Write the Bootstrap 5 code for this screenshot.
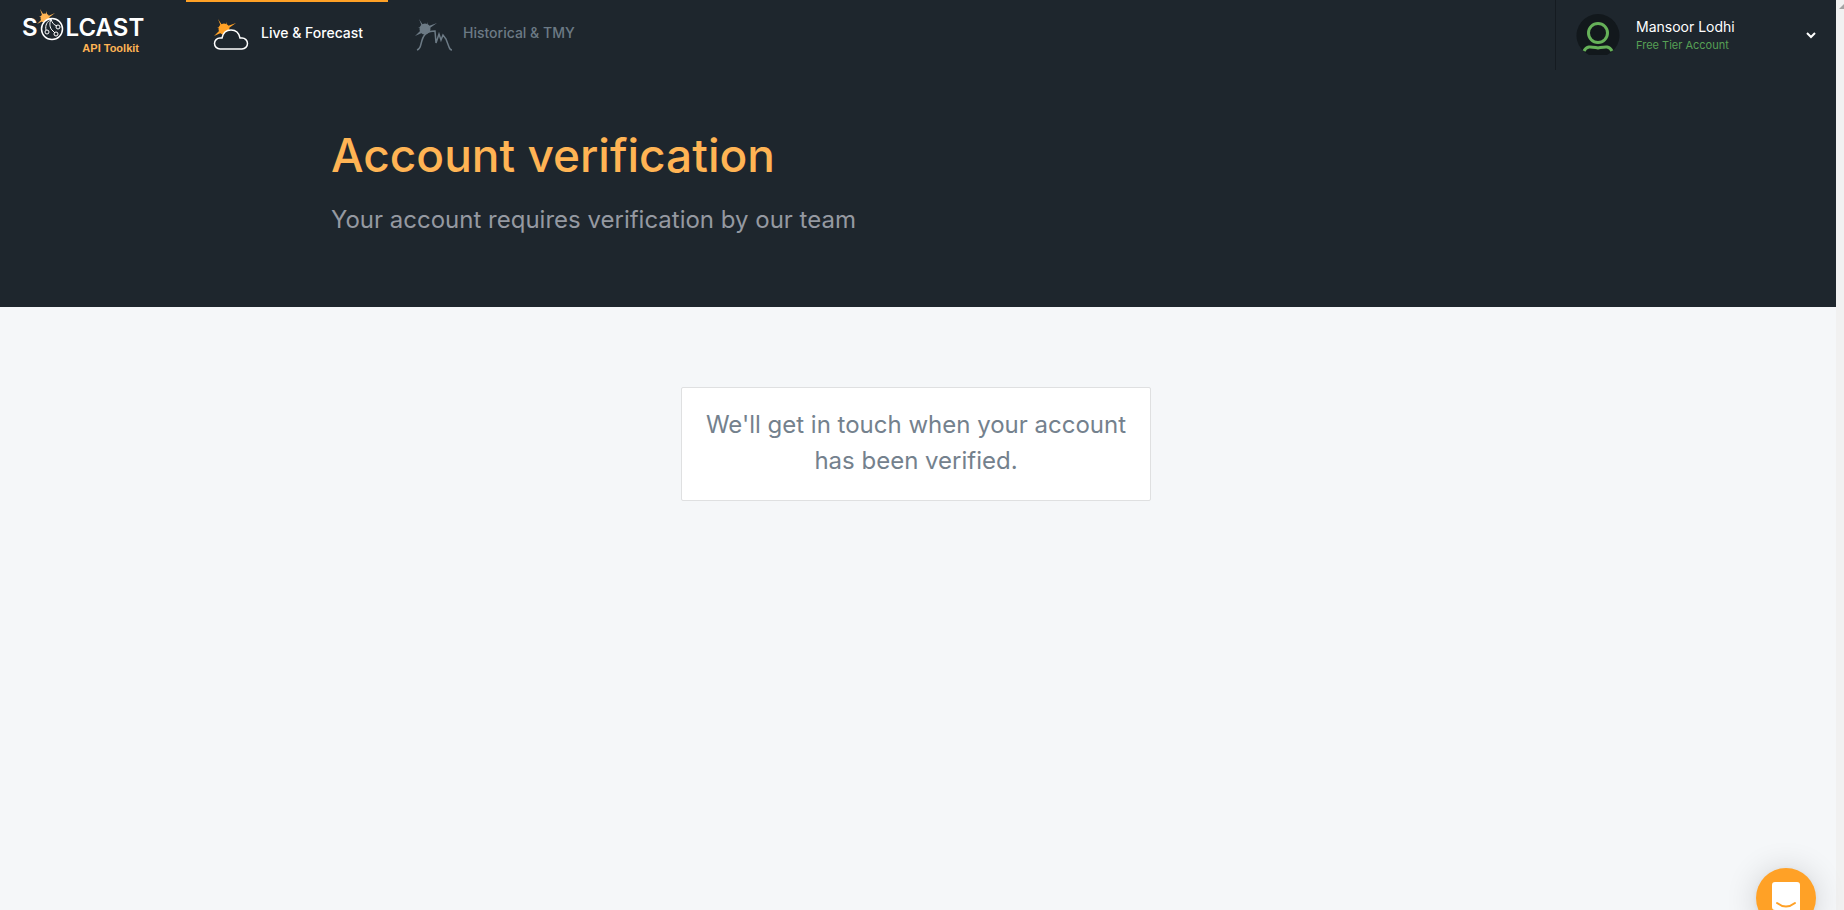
<!DOCTYPE html>
<html lang="en">
<head>
<meta charset="utf-8">
<meta name="viewport" content="width=device-width, initial-scale=1">
<title>Account verification</title>
<link href="https://cdn.jsdelivr.net/npm/bootstrap@5.3.0/dist/css/bootstrap.min.css" rel="stylesheet">
<style>
  body { background: #f5f7f9; font-family: Inter, "Open Sans", sans-serif; overflow: hidden; }
  .page-top { background: #1e262d; color: #fff; }
  .scroll-track { width: 8px; background: #f1f1f1; }
  .site-header { height: 70px; }
  .brand { width: 186px; padding: 14px 0 0 22px; color: #fff; font: 600 24px/28px Inter, sans-serif; }
  .brand:hover { color: #fff; }
  .brand-sub { width: 117px; color: #ffb454; font: 700 11px/12px "Liberation Sans", sans-serif; text-align: right; }
  .tab-link { width: 202px; padding: 0 0 6px 26px; gap: 11px; border-top: 2px solid transparent; color: #6c7a85; font-size: 14px; font-weight: 500; text-decoration: none; white-space: nowrap; }
  .tab-link span { padding-bottom: 2px; }
  .tab-link.active { border-color: #ffa126; color: #fff; }
  .account { width: 281px; border: 0; border-left: 1px solid #151b21; padding: 0 20px; background: none; color: #fff; }
  .account-name { font-size: 14px; line-height: 19px; }
  .account-tier { color: #57a055; font-size: 11px; line-height: 18px; }
  .hero, main { padding-right: 4px; }
  .inner { max-width: 1170px; }
  .hero { padding-top: 54px; padding-bottom: 69px; }
  .hero h1 { color: #ffb454; font-size: 46px; line-height: 62px; font-weight: 500; margin-bottom: 16px; }
  .hero p { color: #9599a1; font-size: 24px; line-height: 36px; font-weight: 400; }
  .notice { width: 470px; margin-top: 80px; padding: 19px 0 21px; background: #fff; border: 1px solid #dfe0e1; border-radius: 2px; color: #74818d; font-size: 24px; line-height: 36px; font-weight: 400; }
  .chat { right: 28px; bottom: -18px; width: 60px; height: 60px; background: #ffa126; box-shadow: 0 1px 6px rgba(0,0,0,.06), 0 2px 32px rgba(0,0,0,.16); }
</style>
</head>
<body>
<div class="d-flex vh-100">
  <div class="flex-grow-1">
    <div class="page-top">
      <header class="site-header d-flex">
        <a class="brand text-decoration-none" href="#">
          <span class="d-flex">S<svg class="flex-shrink-0" width="28" height="28" viewBox="-1 0 28 28" fill="none" overflow="visible">
            <g fill="#ffb454"><circle cx="6" cy="4" r="4.500"/><path d="M1-5l5 8-2 1zM8-3l0 6H6zM16-1L8 5 7 3zM-2 10l6-6 2 2zM0 2l5 0-1 2z"/></g>
            <g stroke="#fff"><circle cx="13" cy="15" r="10.500" stroke-width="1.500" fill="#1e262d"/>
            <path d="M12 5c-4 3-6 6-5 11M12 5c-2 5-1 9 1 11l3 3M12 5c1 4 3 6 6 7"/><circle cx="8" cy="18" r="2"/><circle cx="17" cy="20" r="2"/><circle cx="19" cy="13" r="2"/></g></svg>LCAST</span>
          <span class="brand-sub d-block">API Toolkit</span>
        </a>
        <nav class="d-flex" aria-label="Products">
          <a class="tab-link active d-flex align-items-center" href="#">
            <svg width="38" height="36" viewBox="0 0 38 36" fill="none"><g fill="#ffa126"><circle cx="12" cy="14" r="5.500"/><path d="M6 4l6 9-2 1zM14.500 7l0 6h-2zM24 8l-10 7-1-3zM2 21l7-7 2 3zM5 12l6 0-1 2z"/></g><path d="M8 34a5.500 5.500 0 0 1 0-11h2c1-5 4-8 9-8s8 3 9 8h2a5.500 5.500 0 0 1 0 11z" fill="#1e262d" stroke="#fff" stroke-width="1.500"/></svg>
            <span>Live &amp; Forecast</span>
          </a>
          <a class="tab-link d-flex align-items-center" href="#">
            <svg width="38" height="36" viewBox="0 0 38 36" fill="none"><g fill="#6c7a85"><circle cx="11" cy="14" r="5.500"/><path d="M5 4l6 9-2 1zM13.500 7l0 6h-2zM23 8l-10 7-1-3zM1 21l7-7 2 3zM4 12l6 0-1 2z"/></g><path d="M6 35C10 21 12 17 21 16v9H10z" fill="#1e262d"/><path d="M3 35q3-1 4-6c2-9 5-13 14-13l1 12 3-9 2 6 2-5 3 4 3 8q1 3 3 3" stroke="#6c7a85" stroke-width="1.500"/></svg>
            <span>Historical &amp; TMY</span>
          </a>
        </nav>
        <button class="account d-flex align-items-center text-start ms-auto" type="button">
          <svg width="44" height="44" viewBox="0 0 44 44" fill="none"><path d="M13 42a21.500 21.500 0 1 1 18 0z" fill="#12181c"/><g stroke="#66b159" stroke-width="3"><circle cx="22" cy="20" r="9.500"/><path d="M8 38c3-6 8-4 14-3 6-1 11-3 14 3"/></g></svg>
          <span class="flex-grow-1 ps-3"><span class="account-name d-block">Mansoor Lodhi</span><span class="account-tier d-block">Free Tier Account</span></span>
          <svg width="10" height="8" viewBox="0 0 10 8" fill="none"><path d="M1 2l4 4 4-4" stroke="#fff" stroke-width="2"/></svg>
        </button>
      </header>
      <section class="hero">
        <div class="inner mx-auto">
          <h1>Account verification</h1>
          <p class="mb-0">Your account requires verification by our team</p>
        </div>
      </section>
    </div>
    <main><div class="notice mx-auto text-center">We'll get in touch when your account<br>has been verified.</div></main>
  </div>
  <div class="scroll-track" aria-hidden="true"><svg class="d-block" width="8" height="14"><path d="M3 9h5V4z" fill="#a3a3a3"/></svg></div>
</div>
<button class="chat position-fixed rounded-circle border-0 p-0" type="button" aria-label="Open chat">
  <svg width="28" height="32" viewBox="0 0 28 32" fill="none"><path d="M3 0h22a3 3 0 0 1 3 3v29l-7-4H3a3 3 0 0 1-3-3V3a3 3 0 0 1 3-3z" fill="#fff"/><path d="M5 21q9 7 18 0" stroke="#ffa126" stroke-width="2" stroke-linecap="round"/></svg>
</button>
<script src="https://cdn.jsdelivr.net/npm/bootstrap@5.3.0/dist/js/bootstrap.bundle.min.js"></script>
</body>
</html>
